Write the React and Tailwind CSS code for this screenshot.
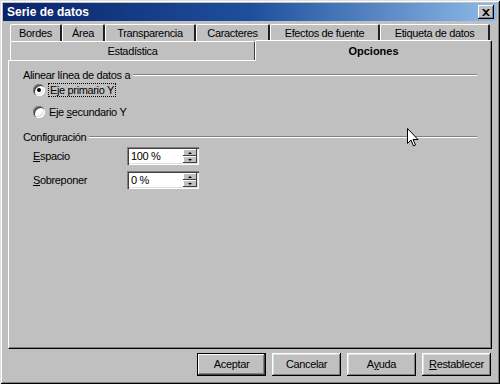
import { useState } from "react";

const pestanasFondo = [
  { id: "bordes", nombre: "Bordes", w: "w-[52px]" },
  { id: "area", nombre: "Área", w: "w-[43px]" },
  { id: "transp", nombre: "Transparencia", w: "w-[91px]" },
  { id: "caract", nombre: "Caracteres", w: "w-[74px]" },
  { id: "efectos", nombre: "Efectos de fuente", w: "w-[110px]" },
  { id: "etiqueta", nombre: "Etiqueta de datos", w: "w-[110px]" },
];

function Radio({ checked }) {
  return (
    <span className="relative inline-block w-[12px] h-[12px] rounded-full bg-white shadow-[inset_1px_1px_0_#808080,inset_2px_2px_0_#404040,inset_-1px_-1px_0_#fff,inset_-2px_-2px_0_#dfdfdf]">
      {checked && <span className="absolute left-[4px] top-[4px] w-[4px] h-[4px] rounded-full bg-black" />}
    </span>
  );
}

function Spin({ valor }) {
  return (
    <div className="flex w-[72px] h-[18px] bg-white shadow-[inset_1px_1px_0_#808080,inset_2px_2px_0_#404040,inset_-1px_-1px_0_#fff,inset_-2px_-2px_0_#dfdfdf] p-[2px]">
      <span className="flex-1 pl-[2px] leading-[14px]">{valor}</span>
      <div className="flex flex-col w-[14px]">
        <div className="flex-1 bg-[#c0c0c0] flex items-center justify-center shadow-[inset_-1px_-1px_0_#404040,inset_1px_1px_0_#fff]">
          <span className="w-0 h-0 border-l-[2px] border-r-[2px] border-b-[2px] border-l-transparent border-r-transparent border-b-black" />
        </div>
        <div className="flex-1 bg-[#c0c0c0] flex items-center justify-center shadow-[inset_-1px_-1px_0_#404040,inset_1px_1px_0_#fff]">
          <span className="w-0 h-0 border-l-[2px] border-r-[2px] border-t-[2px] border-l-transparent border-r-transparent border-t-black" />
        </div>
      </div>
    </div>
  );
}

function GrupoTitulo({ texto }) {
  return (
    <div className="flex items-center h-[14px] pl-[14px] pr-[14px]">
      <span>{texto}</span>
      <div className="flex-1 ml-[3px] h-[2px] border-t border-t-[#808080] border-b border-b-white" />
    </div>
  );
}

function Boton({ children, defecto }) {
  return (
    <button
      className={`w-[69px] h-[23px] bg-[#c0c0c0] ${
        defecto
          ? "border border-black shadow-[inset_-1px_-1px_0_#404040,inset_1px_1px_0_#fff,inset_-2px_-2px_0_#808080]"
          : "shadow-[inset_-1px_-1px_0_#000,inset_1px_1px_0_#fff,inset_-2px_-2px_0_#808080,inset_2px_2px_0_#dfdfdf]"
      }`}
    >
      {children}
    </button>
  );
}

export default function App() {
  const [eje, setEje] = useState("primario");

  return (
    <div
      className="relative w-[500px] h-[384px] bg-[#c0c0c0] text-black text-[11px] tracking-[-0.35px] shadow-[inset_1px_1px_0_#dfdfdf,inset_-1px_-1px_0_#000,inset_2px_2px_0_#fff,inset_-2px_-2px_0_#808080] overflow-hidden select-none"
      style={{ fontFamily: "'Liberation Sans', Arial, sans-serif" }}
    >
      {/* Barra de título */}
      <div className="mx-[3px] pt-[3px]">
        <div className="h-[18px] flex items-center justify-between pl-[4px] pr-[3px] bg-gradient-to-r from-[#0a246a] via-[#1f4f9c] to-[#8fbbe8]">
          <span className="text-white font-bold text-[12px] tracking-normal">Serie de datos</span>
          <div className="w-[16px] h-[14px] bg-[#c0c0c0] flex items-center justify-center shadow-[inset_-1px_-1px_0_#000,inset_1px_1px_0_#fff,inset_-2px_-2px_0_#808080]">
            <svg width="8" height="7" viewBox="0 0 8 7">
              <path d="M0 0h2l2 2 2-2h2L5 3.5 8 7H6L4 5 2 7H0l3-3.5z" fill="#000" />
            </svg>
          </div>
        </div>
      </div>

      {/* Pestañas */}
      <div className="mt-[3px] pl-[10px]">
        <div className="flex h-[17px]">
          {pestanasFondo.map((p) => (
            <div
              key={p.id}
              className={`${p.w} h-[17px] flex items-center justify-center rounded-t-[2px] border-t border-l border-white border-r-2 border-r-[#202020]`}
            >
              {p.nombre}
            </div>
          ))}
        </div>
        <div className="flex h-[19px] items-end">
          <div className="w-[245px] h-[19px] flex items-center justify-center rounded-t-[2px] border-t border-l border-white border-r border-r-[#404040]">
            Estadística
          </div>
          <div className="relative z-10 -mb-[1px] w-[237px] h-[21px] flex items-center justify-center rounded-t-[2px] border-t border-l border-white border-r border-r-black bg-[#c0c0c0] shadow-[inset_-1px_0_0_#808080] font-bold tracking-normal">
            Opciones
          </div>
        </div>
      </div>

      {/* Panel */}
      <div className="ml-[8px] w-[484px] h-[289px] border-t border-l border-white border-r border-b border-r-black border-b-black shadow-[inset_-1px_-1px_0_#808080] pt-[7px]">
        <GrupoTitulo texto="Alinear línea de datos a" />
        <div className="pl-[24px] -mt-[3px]">
          <label className="flex items-center h-[22px] gap-[3px]" onClick={() => setEje("primario")}>
            <Radio checked={eje === "primario"} />
            <span className="px-[1px] border border-dotted border-black leading-[12px]">Eje primario Y</span>
          </label>
          <label className="flex items-center h-[22px] gap-[4px]" onClick={() => setEje("secundario")}>
            <Radio checked={eje === "secundario"} />
            <span>
              Eje <span className="underline">s</span>ecundario Y
            </span>
          </label>
        </div>

        <div className="mt-[7px]">
          <GrupoTitulo texto="Configuración" />
        </div>
        <div className="pl-[24px] mt-[3px] flex items-center h-[18px]">
          <span className="w-[94px]">
            <span className="underline">E</span>spacio
          </span>
          <Spin valor="100 %" />
        </div>
        <div className="pl-[24px] mt-[6px] flex items-center h-[18px]">
          <span className="w-[94px]">
            <span className="underline">S</span>obreponer
          </span>
          <Spin valor="0 %" />
        </div>
      </div>

      {/* Botones */}
      <div className="mt-[4px] pr-[9px] flex justify-end gap-[6px]">
        <Boton defecto>Aceptar</Boton>
        <Boton>Cancelar</Boton>
        <Boton>
          A<span className="underline">y</span>uda
        </Boton>
        <Boton>
          <span className="underline">R</span>establecer
        </Boton>
      </div>

      {/* Puntero */}
      <svg className="absolute left-[407px] top-[128px]" width="12" height="20" viewBox="0 0 12 20">
        <path d="M0.5 0.5v15l3.5-3.5 2.5 6 2-1-2.5-5.5h5z" fill="#fff" stroke="#000" strokeWidth="1" />
      </svg>
    </div>
  );
}
